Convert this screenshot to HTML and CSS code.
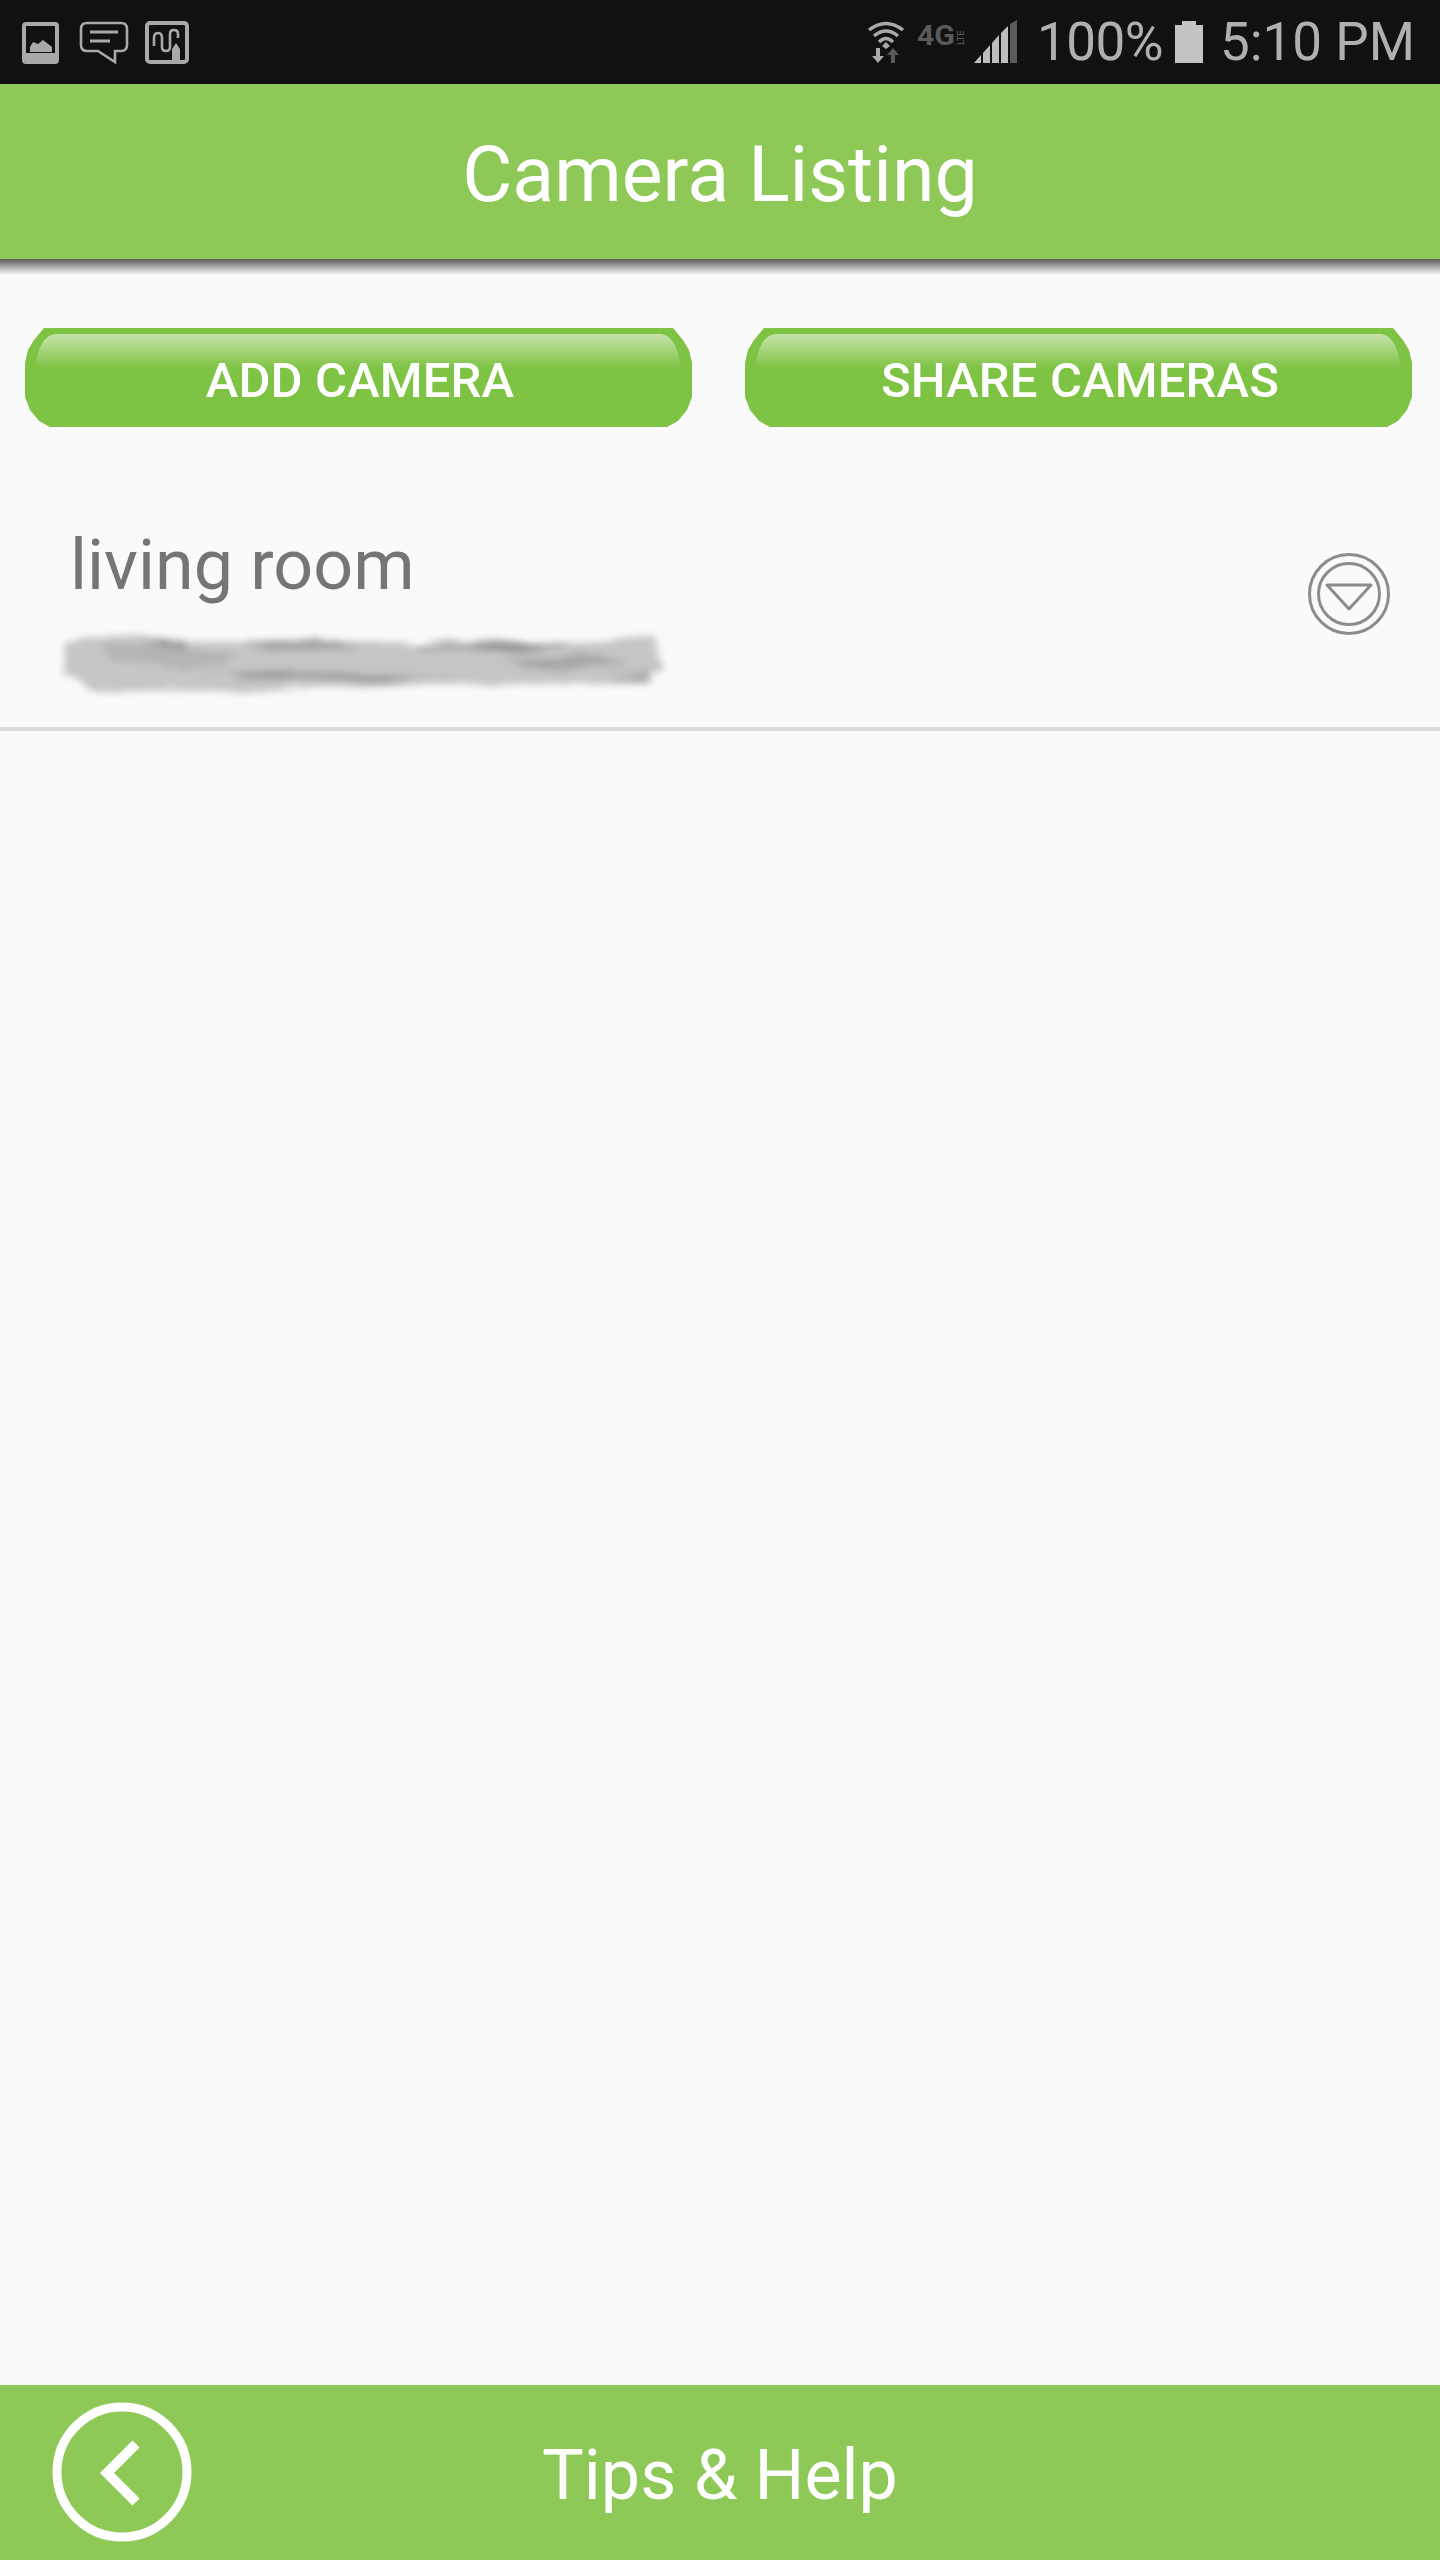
FILE: index.html
```html
<!DOCTYPE html>
<html lang="en">
<head>
<meta charset="utf-8">
<title>Camera Listing</title>
<link rel="stylesheet" href="styles.css">
</head>
<body>
<div class="app">
  <div class="status">
    <div class="status-left">
      <svg class="ic-image" width="38" height="42" viewBox="0 0 38 42"><rect x="2" y="2" width="33" height="38" rx="2" fill="none" stroke="#a9a9a9" stroke-width="4"/><rect x="2" y="31" width="33" height="9" fill="#a9a9a9"/><path d="M8 30V25L11 20L16 22L21 18L30 25V30Z" fill="#a9a9a9"/></svg>
      <svg class="ic-msg" width="50" height="43" viewBox="0 0 50 43"><path d="M8 2H42Q48 2 48 8V24Q48 30 42 30H36V41L19 30H8Q2 30 2 24V8Q2 2 8 2Z" fill="none" stroke="#a9a9a9" stroke-width="2.6"/><path d="M11 11H39M11 20H31" stroke="#a9a9a9" stroke-width="3" fill="none"/></svg>
      <svg class="ic-draw" width="44" height="43" viewBox="0 0 44 43"><rect x="2" y="2" width="40" height="39" rx="3" fill="none" stroke="#a9a9a9" stroke-width="4"/><path d="M9 25V17Q9 12 13 12T17 17V26Q17 30 21 30T25 26V13Q25 9 29 9T33 13V17" fill="none" stroke="#a9a9a9" stroke-width="2.6"/><path d="M27 41V28L31 22L35 28V41Z" fill="#a9a9a9"/></svg>
    </div>
    <div class="status-right">
      <svg class="ic-wifi" width="38" height="44" viewBox="0 0 38 44"><path d="M2 10Q19 -3 36 10M7 16Q19 6 31 16M12 22Q19 15 26 22" fill="none" stroke="#a9a9a9" stroke-width="3.4"/><path d="M15 26L19 22L23 26L19 29Z" fill="#a9a9a9"/><path d="M24 43V35H20L26 28L32 35H28V43Z" fill="#5a5a5a"/><path d="M9 28V36H5L11 43L17 36H13V28Z" fill="#a9a9a9"/></svg>
      <svg class="ic-net" width="48" height="24" viewBox="0 0 48 24"><text class="net-4g" x="0" y="20" textLength="38" lengthAdjust="spacingAndGlyphs">4G</text><text class="net-lte" transform="translate(47 20) rotate(-90)">LTE</text></svg>
      <svg class="ic-signal" width="44" height="43" viewBox="0 0 44 43"><path d="M0 43L7 35V43Z" fill="#bdbdbd"/><path d="M9 33L16 25V43H9Z" fill="#bdbdbd"/><path d="M18 23L25 15V43H18Z" fill="#bdbdbd"/><path d="M27 13L34 6V43H27Z" fill="#bdbdbd"/><path d="M36 4L43 0V43H36Z" fill="#5a5a5a"/></svg>
      <span class="pct">100%</span>
      <svg class="ic-batt" width="28" height="42" viewBox="0 0 28 42"><path d="M7 0H21V4H28V42H0V4H7Z" fill="#c4c4c4"/></svg>
      <span class="time">5:10 PM</span>
    </div>
  </div>
  <header class="header"><span class="header-label">Camera Listing</span></header>
  <div class="header-shadow"></div>
  <div class="actions">
    <button class="btn">ADD CAMERA</button>
    <button class="btn">SHARE CAMERAS</button>
  </div>
  <div class="row">
    <div class="row-main">
      <div class="cam-name">living room</div>
      <svg class="smudge" width="610" height="66" viewBox="0 0 610 66">
        <defs>
          <filter id="blur" x="-5%" y="-40%" width="110%" height="180%">
            <feTurbulence type="fractalNoise" baseFrequency="0.012 0.12" numOctaves="3" seed="4" result="n"/>
            <feDisplacementMap in="SourceGraphic" in2="n" scale="16" xChannelSelector="R" yChannelSelector="G"/>
            <feGaussianBlur stdDeviation="3.6"/>
          </filter>
        </defs>
        <g filter="url(#blur)">
          <path d="M0 14L60 6L170 14L290 14L400 14L520 14L590 8L598 40L580 54L500 54L390 58L280 58L150 62L30 60L0 46Z" fill="#c6c6c6"/>
          <path d="M36 18L120 14L180 30L120 40L46 36Z" fill="#b4b4b4"/>
          <path d="M130 46L290 44L400 50L270 54Z" fill="#a0a0a0"/>
          <path d="M346 16L516 14L476 22L356 22Z" fill="#989898"/>
          <path d="M436 34L516 26L566 36L496 44Z" fill="#a8a8a8"/>
          <path d="M76 14L126 12L116 18Z" fill="#949494"/>
          <path d="M176 14L256 12L296 20L206 22Z" fill="#a6a6a6"/>
          <path d="M526 48L592 42L582 50Z" fill="#989898"/>
        </g>
      </svg>
    </div>
    <svg class="ic-more" width="84" height="84" viewBox="0 0 84 84"><circle cx="42" cy="42" r="39.5" fill="none" stroke="#8c8c8c" stroke-width="3"/><circle cx="42" cy="42" r="30.5" fill="none" stroke="#8c8c8c" stroke-width="3"/><path d="M20 33H64L42 57Z" fill="none" stroke="#8c8c8c" stroke-width="3" stroke-linejoin="round"/></svg>
  </div>
  <main class="content"></main>
  <footer class="footer">
    <svg class="ic-back" width="140" height="140" viewBox="0 0 140 140"><circle cx="70" cy="70" r="65" fill="none" stroke="#fff" stroke-width="9"/><path d="M84 42L55 71L84 100" fill="none" stroke="#fff" stroke-width="10"/></svg>
    <span class="footer-label">Tips &amp; Help</span>
  </footer>
</div>
</body>
</html>
```
FILE: styles.css
```css
* { box-sizing: border-box; }
html, body { margin: 0; padding: 0; }
body { background: #fafafa; font-family: Roboto, "Liberation Sans", sans-serif; }
.app { width: 1440px; height: 2560px; display: flex; flex-direction: column; background: #fafafa; }

.status { height: 84px; flex: none; background: #111; display: flex; justify-content: space-between; align-items: flex-start; padding: 20px 25px 0 22px; }
.status svg { display: block; flex: none; overflow: visible; }
.status-left { display: flex; align-items: flex-start; gap: 19px; padding-top: 1px; }
.ic-image { margin-top: 1px; }
.ic-msg { margin-right: -3px; }
.status-right { display: flex; align-items: flex-start; color: #b0b0b0; }
.ic-wifi { margin-right: 12px; }
.ic-net { margin: 5px 9px 0 0; }
.net-4g { font: 700 27px Roboto, sans-serif; fill: #5a5a5a; }
.net-lte { font: 500 9px Roboto, sans-serif; fill: #5a5a5a; }
.ic-signal { margin-right: 19px; }
.pct, .time { font-size: 53px; line-height: 44px; font-weight: 400; }
.pct { margin-right: 12px; width: 126px; letter-spacing: -.5px; }
.ic-batt { margin: 1px 17px 0 0; }

.header { height: 175px; flex: none; background: #8ec958; color: #fff; font-size: 77px; display: flex; align-items: center; justify-content: center; padding-top: 7px; }
.header-shadow { height: 16px; flex: none; background: linear-gradient(#5c5c5c, #fafafa); }

.actions { display: flex; gap: 53px; padding: 53px 28px 0 25px; flex: none; }
.btn { position: relative; isolation: isolate; flex: 1; height: 99px; border: 0; padding: 6px 0 0 3px; background: #7fc344; color: #fff; font: 500 49px Roboto, sans-serif; letter-spacing: .15px; clip-path: polygon(19px 0, calc(100% - 19px) 0, calc(100% - 9px) 12px, calc(100% - 3px) 22px, 100% 35px, 100% 69px, calc(100% - 5px) 82px, calc(100% - 14px) 93px, calc(100% - 25px) 99px, 25px 99px, 14px 93px, 5px 82px, 0 69px, 0 35px, 3px 22px, 9px 12px); }
.btn::before { content: ""; position: absolute; z-index: -1; left: 11px; right: 12px; top: 6px; height: 34px; border-radius: 20px 20px 0 0 / 34px 34px 0 0; background: linear-gradient(#c6e4ac, #7fc344); }

.row { height: 304px; flex: none; display: flex; justify-content: space-between; align-items: flex-start; padding: 0 49px 0 64px; border-bottom: 4px solid #dcdcdc; }
.row-main { display: flex; flex-direction: column; }
.cam-name { color: #757575; font-size: 70px; line-height: 80px; padding: 98px 0 0 6px; }
.smudge { display: block; margin-top: 23px; overflow: visible; }
.ic-more { display: block; margin-top: 125px; }

.content { flex: 1; }

.footer { position: relative; height: 175px; flex: none; background: #8ec958; color: #fff; display: flex; align-items: center; justify-content: center; }
.footer-label { font-size: 70px; padding-top: 4px; }
.ic-back { position: absolute; left: 52px; top: 17px; }
```
